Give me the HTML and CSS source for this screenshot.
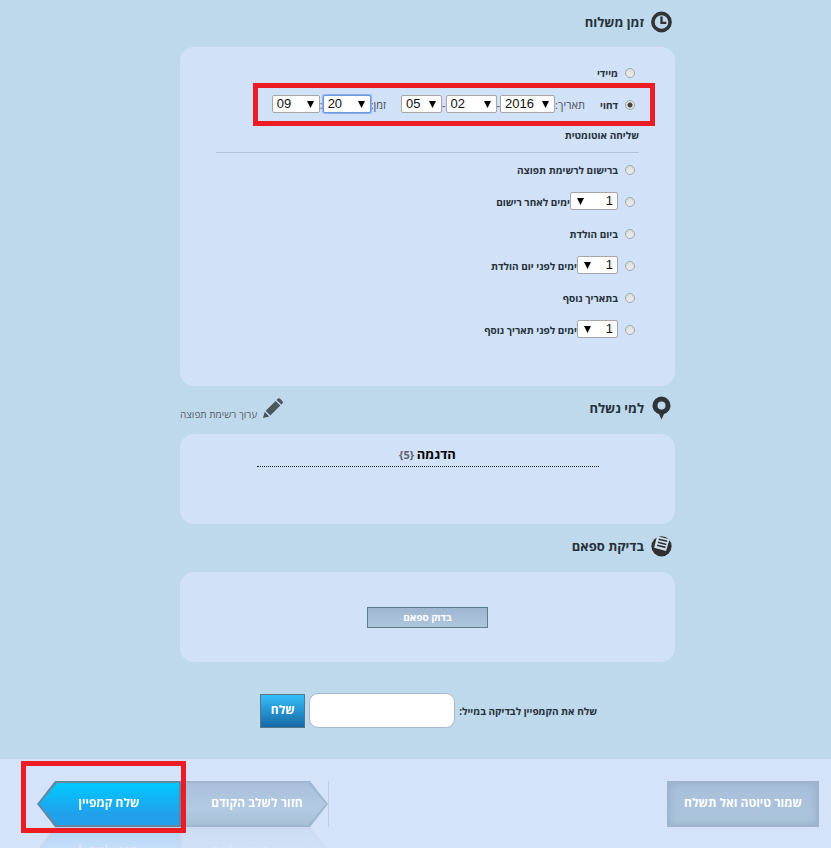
FILE: index.html
```html
<!DOCTYPE html>
<html lang="he" dir="rtl">
  <head>
    <meta charset="UTF-8" />
    <meta name="viewport" content="width=device-width, initial-scale=1.0" />
    <link rel="stylesheet" href="styles.css">
    <title>שלח קמפיין</title>
  </head>
  <body>
    <main class="content">
      <section class="time">
        <div class="head">
          <svg class="icon" viewBox="0 0 20 20">
            <circle cx="10" cy="10" r="8.2" fill="none" stroke="#333436" stroke-width="3.4" />
            <path d="M10 4.800V10.800H14.600" fill="none" stroke="#333436" stroke-width="2.200" />
          </svg>
          <h2>זמן משלוח</h2>
        </div>
        <div class="panel">
          <div class="row">
            <input type="radio" name="when" id="now" />
            <label for="now">מיידי</label>
          </div>
          <div class="row marked">
            <input type="radio" name="when" id="later" checked />
            <label for="later">דחוי</label>
            <div class="picker">
              <label for="year">תאריך:</label>
              <select id="year" class="w-year"><option>2016</option></select>
              <span>-</span>
              <select class="w-wide" aria-label="חודש"><option>02</option></select>
              <span>-</span>
              <select class="w-small" aria-label="יום"><option>05</option></select>
            </div>
            <div class="picker">
              <label for="minutes">זמן:</label>
              <select id="minutes" class="w-time focused"><option>20</option></select>
              <span>:</span>
              <select class="w-time" aria-label="שעה"><option>09</option></select>
            </div>
          </div>
          <h3>שליחה אוטומטית</h3>
          <div class="row">
            <input type="radio" name="when" id="signup" />
            <label for="signup">ברישום לרשימת תפוצה</label>
          </div>
          <div class="row">
            <input type="radio" name="when" id="after" />
            <select class="days wide" aria-label="מספר ימים לאחר רישום"><option>1</option></select>
            <label for="after">ימים לאחר רישום</label>
          </div>
          <div class="row">
            <input type="radio" name="when" id="birthday" />
            <label for="birthday">ביום הולדת</label>
          </div>
          <div class="row">
            <input type="radio" name="when" id="before-birthday" />
            <select class="days" aria-label="מספר ימים לפני יום הולדת"><option>1</option></select>
            <label for="before-birthday">ימים לפני יום הולדת</label>
          </div>
          <div class="row">
            <input type="radio" name="when" id="extra" />
            <label for="extra">בתאריך נוסף</label>
          </div>
          <div class="row">
            <input type="radio" name="when" id="before-extra" />
            <select class="days" aria-label="מספר ימים לפני תאריך נוסף"><option>1</option></select>
            <label for="before-extra">ימים לפני תאריך נוסף</label>
          </div>
        </div>
      </section>

      <section>
        <div class="head">
          <svg class="icon" viewBox="0 0 20 24">
            <path fill="#2d3538" fill-rule="evenodd" d="M10 .5a9 9 0 0 1 9 9c0 4-2.700 7.300-6.500 8.600L10 23.500l-2.500-5.400C3.700 16.800 1 13.500 1 9.500a9 9 0 0 1 9-9zm0 4.900a4 4 0 1 0 0 8 4 4 0 0 0 0-8z" />
          </svg>
          <h2>למי נשלח</h2>
          <a class="edit" href="#">
            <svg viewBox="0 0 20 20">
              <path fill="#4a575f" d="M0 20l1.700-6.200 4.600 4.600zM2.700 12.700L12.600 2.900l4.700 4.600-9.900 9.900zM13.600 1.900l1.300-1.300q1-.9 2 0l2.600 2.600q.9 1 0 2l-1.200 1.300z" />
            </svg>
            <span>ערוך רשימת תפוצה</span>
          </a>
        </div>
        <div class="panel">
          <p class="list-name"><b>הדגמה</b> <span>{5}</span></p>
        </div>
      </section>

      <section>
        <div class="head">
          <svg class="icon" viewBox="0 0 20 20">
            <circle cx="10" cy="10.300" r="9.600" fill="#302f31" />
            <path fill="#cfe2ee" d="M5.700.8l12 2.700-3.400 11.300L3 11.700z" />
            <path stroke="#302f31" stroke-width="1.500" d="M7.300 3.600l8.200 1.900M6.600 6.500l8 2M5.800 9.300l7.900 2" />
          </svg>
          <h2>בדיקת ספאם</h2>
        </div>
        <div class="panel spam">
          <button class="check" type="button">בדוק ספאם</button>
        </div>
      </section>

      <form class="test-mail">
        <label for="mail">שלח את הקמפיין לבדיקה במייל:</label>
        <input type="text" id="mail" />
        <button type="button">שלח</button>
      </form>
    </main>

    <footer>
      <button class="draft" type="button">שמור טיוטה ואל תשלח</button>
      <div class="steps">
        <button class="step prev" type="button"><span>חזור לשלב הקודם</span></button>
        <div class="send-mark">
          <button class="step send" type="button"><span>שלח קמפיין</span></button>
        </div>
      </div>
    </footer>
  </body>
</html>
```
FILE: styles.css
```css
* {
  margin: 0;
  padding: 0;
  box-sizing: border-box;
}
body {
  background: #bfd9ec;
  color: #25313a;
  font: 10px/16px "Open Sans", "Liberation Sans", sans-serif;
}
button,
input,
select {
  font-family: inherit;
}
.content {
  max-width: 495px;
  margin-right: 156px;
}

/* section titles */
.head {
  display: flex;
  align-items: center;
  gap: 7px;
  height: 48px;
  padding: 0 3px 4px 0;
}
.time .head {
  height: 47px;
}
.icon {
  width: 21px;
  height: 24px;
}
h2 {
  font-size: 13px;
  line-height: 20px;
}
.edit {
  display: flex;
  align-items: center;
  gap: 6px;
  margin-right: auto;
  color: #555b69;
  text-decoration: none;
}
.edit svg {
  width: 20px;
  height: 20px;
}
.edit span {
  padding-top: 12px;
}

.panel {
  min-height: 90px;
  padding: 10px 36px;
  background: #d1e1f7;
  border-radius: 14px;
}
.time .panel {
  padding-bottom: 40px;
}
.row {
  display: flex;
  align-items: center;
  height: 32px;
  padding-right: 4px;
  font-weight: bold;
}
h3 {
  height: 32px;
  margin-bottom: 1px;
  padding-top: 6px;
  border-bottom: 1px solid #adc3db;
  font-size: 10px;
  line-height: 16px;
}
input[type="radio"] {
  appearance: none;
  width: 10px;
  height: 10px;
  margin-left: 7px;
  border: 1px solid #a5a5a5;
  border-radius: 50%;
  background: linear-gradient(#ddd, #eee);
}
input[type="radio"]:checked {
  background: radial-gradient(circle, #444 2px, #e4e4e4 3px);
}
.picker {
  display: flex;
  align-items: center;
  margin-right: 15px;
  color: #4a5058;
  font-size: 11px;
  font-weight: normal;
}
select {
  appearance: none;
  height: 18px;
  margin-bottom: 2px;
  padding: 0 4px;
  border: 1px solid #a6a6a6;
  border-radius: 2px;
  background: #fff url("data:image/svg+xml,%3Csvg xmlns='http://www.w3.org/2000/svg' width='7' height='7'%3E%3Cpath d='M0 0h7L3.500 7z'/%3E%3C/svg%3E") no-repeat right 5px center;
  color: #111;
  font: 13px/16px "Liberation Sans", sans-serif;
  direction: ltr;
}
.w-year {
  width: 55px;
}
.w-wide {
  width: 51px;
}
.w-small {
  width: 41px;
}
.w-time {
  width: 48px;
}
.focused {
  border-color: #6f97de;
  box-shadow: 0 0 0 1px #8db2f0;
}
.days {
  width: 41px;
  background-position: left 6px center;
  direction: rtl;
}
.days.wide {
  width: 48px;
}

/* red frames round the two steps to follow */
.marked,
.send-mark {
  position: relative;
}
.marked::after,
.send-mark::after {
  content: "";
  position: absolute;
  inset: -6px -16px -5px 37px;
  border: 5px solid #ed1c24;
  pointer-events: none;
}

.list-name {
  width: 342px;
  margin: 0 auto;
  padding: 2px 0;
  border-bottom: 1px dotted #222;
  text-align: center;
  line-height: 17px;
}
.list-name b {
  color: #000;
  font-size: 13px;
}
.list-name span {
  color: #5d6070;
  font-size: 11px;
  font-weight: bold;
}
.spam {
  display: flex;
  align-items: center;
  justify-content: center;
}
.check {
  width: 121px;
  height: 21px;
  border: 1px solid #5d7d89;
  background: linear-gradient(#9fb6d2, #adc6dc);
  color: #fff;
  font-size: 10px;
  font-weight: bold;
}
.test-mail {
  display: flex;
  align-items: center;
  gap: 4px;
  padding: 31px 78px;
  font-weight: bold;
  white-space: nowrap;
}
.test-mail input {
  width: 146px;
  height: 35px;
  padding: 0 8px;
  border: 1px solid #a5b8d0;
  border-radius: 9px;
  background: #fff;
}
.test-mail button {
  width: 45px;
  height: 34px;
  padding-bottom: 2px;
  border: 1px solid #56778a;
  background: linear-gradient(#35bdfb, #1769a5);
  color: #fff;
  font-size: 12px;
  font-weight: bold;
}

footer {
  display: flex;
  justify-content: space-between;
  height: 89px;
  padding: 22px 12px 0 37px;
  overflow: hidden;
  background: #d5e3fa;
}
footer button {
  height: 46px;
  padding-bottom: 4px;
  border: 0;
  color: #fff;
  font-size: 12px;
  font-weight: bold;
}
.draft {
  width: 152px;
  border: 2px solid #a0b3cb;
  background: linear-gradient(#a9bfdc, #aac5d9);
  box-shadow: inset 0 0 8px #95adc8;
}
.steps {
  display: flex;
  height: 46px;
  border-right: 1px solid #bfd0e5;
}
.step {
  position: relative;
  display: block;
  background: none;
  -webkit-box-reflect: below 0 linear-gradient(transparent 20%, rgba(0, 0, 0, 0.2));
}
/* arrow: outline below, fill on top */
.step::before,
.step::after {
  content: "";
  position: absolute;
  inset: 0;
}
.step::after {
  inset: 2px;
}
.step span {
  position: relative;
  z-index: 1;
}
.send {
  width: 144px;
}
.send::before,
.send::after {
  background: #6088a4;
  clip-path: polygon(0 50%, 18px 0, 100% 0, 100% 100%, 18px 100%);
}
.send::after {
  background: linear-gradient(#00c9ff, #22a0eb 75%);
}
.prev {
  width: 147px;
  padding-left: 5px;
}
.prev::before,
.prev::after {
  background: #a1b6ce;
  clip-path: polygon(0 0, calc(100% - 18px) 0, 100% 50%, calc(100% - 18px) 100%, 0 100%);
}
.prev::after {
  background: linear-gradient(#a9bfdc, #b3cbe2 60%, #a6c0d5);
}
.send-mark::after {
  inset: -20px -5px -6px -16px;
}
```
